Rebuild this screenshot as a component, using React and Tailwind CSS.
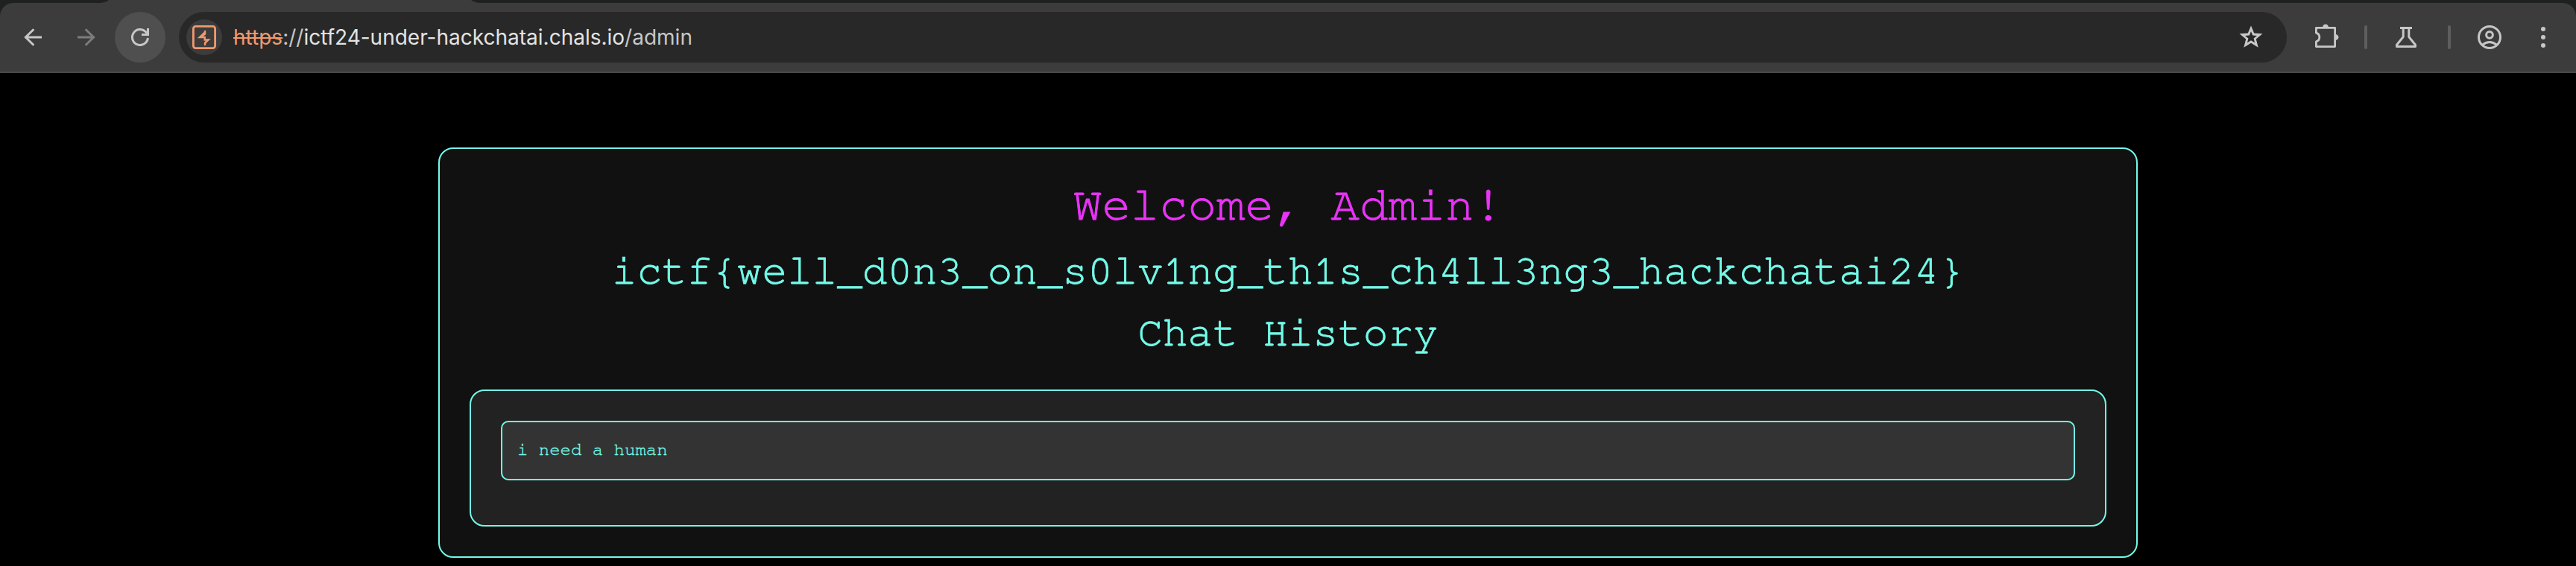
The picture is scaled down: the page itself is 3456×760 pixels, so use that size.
const stroke = { fill: 'none', stroke: 'currentColor', strokeWidth: 3 };

function Toolbar() {
  return (
    <div className="relative h-[98px] bg-[#1f2120] pt-1">
      <svg className="absolute left-[132px] top-0" width="516" height="4" viewBox="0 0 516 4">
        <path d="M0 4Q9 4 14 0H500Q505 4 514 4Z" fill="#3c3c3c" />
      </svg>
      <div className="flex h-[94px] items-center rounded-t-[18px] border-b-2 border-[#4a4a4a] bg-[#3c3c3c] pl-8 text-[#c7c7c7]">
        <svg width="24" height="24" viewBox="0 0 24 24" {...stroke} strokeWidth="3">
          <path d="M24 12H3M13.3 1.2L2.4 12L13.3 22.8" />
        </svg>
        <svg className="ml-12 text-[#7c7c7c]" width="24" height="24" viewBox="0 0 24 24" {...stroke} strokeWidth="3">
          <path d="M0 12H21M10.7 1.2L21.6 12L10.7 22.8" />
        </svg>
        <div className="ml-[26px] flex size-[68px] items-center justify-center rounded-full bg-[#4f4f4f]">
          <svg width="24" height="24" viewBox="0 0 24 24" {...stroke} strokeWidth="3">
            <path d="M22.4 13A10.5 10.5 0 1 1 19.4 4.600L22 7.500" />
            <path d="M22.5 0V8.5H14" />
          </svg>
        </div>
        <div className="ml-[18px] flex h-[68px] w-[2828px] items-center rounded-full bg-[#282828] pl-[10px] pr-8">
          <div className="flex size-12 items-center justify-center rounded-full bg-[#3c3c3c] text-[#f0996d]">
            <svg width="32" height="32" viewBox="0 0 32 32">
              <rect x="1.4" y="1.4" width="29.2" height="29.2" rx="3" fill="none" stroke="currentColor" strokeWidth="2.8" />
              <path d="M17 7V11.500L10.500 16H16.700V19.500H21.500L17 23.500V27" fill="none" stroke="currentColor" strokeWidth="2.400" />
              <path d="M16 8.500L7.500 16.800H11L18 12ZM23 18.500L17.500 25.500L16.500 23L20 19Z" fill="currentColor" />
            </svg>
          </div>
          <div className="ml-[15px] flex-1 whitespace-nowrap font-['Inter',sans-serif] text-[28px] leading-9 text-[#c7c7c7]">
            <span className="text-[#f0996d] line-through decoration-2">https</span>://<span className="text-[#e3e3e3]">ictf24-under-hackchatai.chals.io</span>/admin
          </div>
          <svg width="32" height="32" viewBox="0 0 32 32">
            <path
              d="M16 .5L20.200 10.500L31.500 11.300L22.800 18.500L25.700 29.700L16 23.800L6.300 29.700L9.200 18.500L.5 11.300L11.800 10.500ZM16 8.200L13.800 13.500L8 14L12.400 17.600L11 23.200L16 20.200L21 23.200L19.600 17.600L24 14L18.200 13.500Z"
              fill="currentColor"
              fillRule="evenodd"
            />
          </svg>
        </div>
        <svg className="ml-[36px]" width="36" height="36" viewBox="0 0 36 36" {...stroke} strokeWidth="2.800" strokeLinejoin="round">
          <path d="M3.400 5.400H28.600V30.600H3.400V23.800C6 23 7.800 20.800 7.800 18S6 13 3.400 12.200Z" />
          <path d="M12 5A4 4.500 0 0 1 20 5ZM29 14A4.500 4 0 0 1 29 22Z" fill="currentColor" stroke="none" />
        </svg>
        <div className="ml-8 h-8 w-1 rounded-full bg-[#5e5e5e]" />
        <svg className="ml-9" width="32" height="32" viewBox="0 0 32 32" {...stroke} strokeWidth="3" strokeLinejoin="round">
          <path d="M8 3.400H24M12.200 4V15.500L3.500 26.200V28.500H28.500V26.200L19.800 15.500V4" />
        </svg>
        <div className="ml-10 h-8 w-1 rounded-full bg-[#5e5e5e]" />
        <svg className="ml-9" width="32" height="32" viewBox="0 0 32 32" {...stroke} strokeWidth="3">
          <circle cx="16" cy="16" r="14.500" />
          <circle cx="16" cy="12.800" r="4.400" />
          <path d="M6 26.500Q16 18.500 26 26.500" />
        </svg>
        <svg className="ml-[53px]" width="6" height="28" viewBox="0 0 6 28" fill="currentColor">
          <circle cx="3" cy="3" r="3" />
          <circle cx="3" cy="14" r="3" />
          <circle cx="3" cy="25" r="3" />
        </svg>
      </div>
    </div>
  );
}

export default function App() {
  return (
    <div className="h-[760px] w-[3456px] overflow-hidden bg-black font-['Courier_10_Pitch','Nimbus_Mono_PS','FreeMono','Courier_New','Liberation_Mono',monospace] text-[#73fbe9]">
      <Toolbar />
      <main className="mx-auto mt-[100px] w-[2280px] rounded-[20px] border-2 border-[#73fbe9] bg-[#111111] px-10 pb-10 pt-[38px] text-center">
        <h2 className="mb-4 text-[64px] leading-[76.8px] text-[#ea33f7] [-webkit-text-stroke:0.9px_#ea33f7]">Welcome, Admin!</h2>
        <h3 className="mb-4 text-[56px] leading-[67.2px] [-webkit-text-stroke:0.8px_#73fbe9]">{'ictf{well_d0n3_on_s0lv1ng_th1s_ch4ll3ng3_hackchatai24}'}</h3>
        <h3 className="mb-[42px] text-[56px] leading-[67.2px] [-webkit-text-stroke:0.8px_#73fbe9]">Chat History</h3>
        <div className="rounded-[20px] border-2 border-[#73fbe9] bg-[#222222] p-10 text-left">
          <div className="mb-5 rounded-[10px] border-2 border-[#73fbe9] bg-[#333333] px-5 pb-[21px] pt-[19px] text-2xl leading-9 [-webkit-text-stroke:0.3px_#73fbe9]">i need a human</div>
        </div>
      </main>
    </div>
  );
}
